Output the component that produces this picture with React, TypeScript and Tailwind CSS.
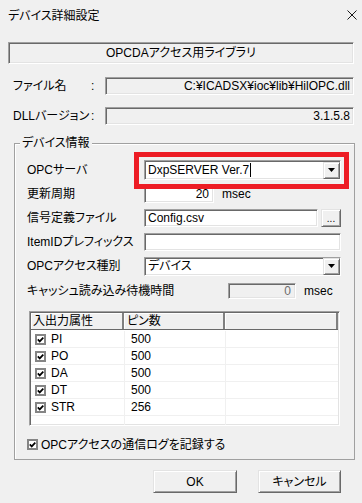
const sunken =
  'border border-t-[#a0a0a0] border-l-[#a0a0a0] border-b-white border-r-white shadow-[inset_1px_1px_0_#696969,inset_-1px_-1px_0_#e3e3e3]';
const raised =
  'border border-t-[#e3e3e3] border-l-[#e3e3e3] border-b-[#696969] border-r-[#696969] bg-[#f0f0f0] shadow-[inset_1px_1px_0_#fff,inset_-1px_-1px_0_#a0a0a0]';

const pins = [
  ['PI', '500'],
  ['PO', '500'],
  ['DA', '500'],
  ['DT', '500'],
  ['STR', '256'],
];

function DropButton() {
  return (
    <span className={`flex h-[17px] w-[17px] shrink-0 items-center justify-center ${raised}`}>
      <svg width="7" height="4" viewBox="0 0 7 4">
        <path d="M0 0h7L3.5 4z" fill="#000" />
      </svg>
    </span>
  );
}

function Check() {
  return (
    <svg width="11" height="11" viewBox="0 0 11 11" className="shrink-0">
      <rect x="1" y="1" width="9" height="9" fill="#fff" stroke="#858585" strokeWidth="2" />
      <path d="M2.8 5.4 4.7 7.4 8.3 3.6" fill="none" stroke="#000" strokeWidth="1.7" />
    </svg>
  );
}

function Row({ label, wide, children }: { label: string; wide?: boolean; children: React.ReactNode }) {
  return (
    <div className="flex h-[24px] items-center">
      <span className={`${wide ? 'w-[201px]' : 'w-[117px]'} shrink-0 whitespace-nowrap`}>{label}</span>
      {children}
    </div>
  );
}

export default function App() {
  return (
    <div className="relative h-[503px] w-[362px] overflow-hidden bg-[#f0f0f0] text-[12px] leading-[14px] text-black [font-family:'Liberation_Sans','Noto_Sans_CJK_JP',sans-serif] [font-feature-settings:'palt']">
      <div className="flex h-[30px] items-center justify-between pl-2 pr-[5px]">
        <span className="[font-family:'Noto_Sans_CJK_JP',sans-serif]">デバイス詳細設定</span>
        <svg width="10" height="10" viewBox="0 0 10 10">
          <path d="M0.5 0.5 9.5 9.5M9.5 0.5 0.5 9.5" stroke="#1a1a1a" strokeWidth="1" />
        </svg>
      </div>

      <div className="px-2">
        <div className={`mt-[12px] flex h-[22px] w-[346px] items-center justify-center ${sunken}`}>
          OPCDAアクセス用ライブラリ
        </div>

        <div className="mt-[13px] flex h-[18px] items-center">
          <span className="w-[83px] pl-[5px]">ファイル名</span>
          <span className="w-[14px]">:</span>
          <div className={`flex h-[18px] w-[249px] items-center justify-end pr-[3px] ${sunken}`}>
            C:¥ICADSX¥ioc¥lib¥HilOPC.dll
          </div>
        </div>

        <div className="mt-[12px] flex h-[18px] items-center">
          <span className="w-[83px] whitespace-nowrap pl-[5px]">DLLバージョン</span>
          <span className="w-[14px]">:</span>
          <div className={`flex h-[18px] w-[249px] items-center justify-end pr-[3px] ${sunken}`}>3.1.5.8</div>
        </div>

        <fieldset className="ml-[6px] mt-[11px] h-[324px] w-[341px] border border-[#a0a0a0] shadow-[inset_1px_1px_0_#fff]">
          <legend className="ml-[5px] bg-[#f0f0f0] px-[2px] leading-[14px]">デバイス情報</legend>
          <div className="mt-[8px] pl-[12px]">
            <Row label="OPCサーバ">
              <div className={`flex h-[20px] w-[197px] items-center bg-white pl-[3px] ${sunken}`}>
                <span className="flex flex-1 items-center">
                  DxpSERVER Ver.7
                  <span className="ml-px inline-block h-[14px] w-px bg-black" />
                </span>
                <DropButton />
              </div>
            </Row>
            <Row label="更新周期">
              <div className={`flex h-[18px] w-[70px] items-center justify-end bg-white pr-[4px] ${sunken}`}>20</div>
              <span className="ml-[8px]">msec</span>
            </Row>
            <Row label="信号定義ファイル">
              <div className={`flex h-[18px] w-[174px] items-center bg-white pl-[3px] ${sunken}`}>Config.csv</div>
              <button className={`ml-[3px] flex h-[18px] w-[20px] items-end justify-center pb-[3px] text-[10px] leading-[8px] ${raised}`}>
                ...
              </button>
            </Row>
            <Row label="ItemIDプレフィックス">
              <div className={`h-[18px] w-[197px] bg-white ${sunken}`} />
            </Row>
            <Row label="OPCアクセス種別">
              <div className={`flex h-[19px] w-[197px] items-center bg-white pl-[3px] ${sunken}`}>
                <span className="flex-1">デバイス</span>
                <DropButton />
              </div>
            </Row>
            <div className="flex h-[26px] items-center">
              <span className="w-[201px] shrink-0 whitespace-nowrap">キャッシュ読み込み待機時間</span>
              <div className={`flex h-[16px] w-[68px] items-center justify-end pr-[4px] text-[#6d6d6d] ${sunken}`}>0</div>
              <span className="ml-[8px]">msec</span>
            </div>

            <div className={`ml-[2px] mt-[7px] h-[115px] w-[311px] overflow-hidden bg-white ${sunken}`}>
              <div className="m-px flex h-[17px] border-b border-[#696969] bg-[#f0f0f0]">
                <div className="flex w-[93px] items-center border-r-2 border-r-[#808080] pl-[2px] shadow-[inset_1px_1px_0_#fff]">
                  入出力属性
                </div>
                <div className="flex w-[101px] items-center border-r-2 border-r-[#808080] pl-[3px] shadow-[inset_1px_1px_0_#fff]">
                  ピン数
                </div>
                <div className="flex-1 border-r-2 border-r-[#808080] shadow-[inset_1px_1px_0_#fff]" />
              </div>
              {[...pins, ['', '']].map(([name, count], i) => (
                <div key={i} className="mx-px flex h-[17px] border-b border-[#f0f0f0]">
                  <div className="flex w-[94px] items-center gap-[5px] border-r border-[#f0f0f0] pl-[4px]">
                    {name ? <Check /> : null}
                    {name}
                  </div>
                  <div className="flex w-[101px] items-center border-r border-[#f0f0f0] pl-[6px]">{count}</div>
                  <div className="flex-1" />
                </div>
              ))}
            </div>

            <div className="mt-[12px] flex h-[13px] items-center gap-[3px]">
              <Check />
              <span>OPCアクセスの通信ログを記録する</span>
            </div>
          </div>
        </fieldset>

        <div className="mr-[13px] mt-[10px] flex justify-end gap-[21px]">
          <button className={`h-[23px] w-[84px] ${raised}`}>OK</button>
          <button className={`h-[23px] w-[83px] ${raised}`}>キャンセル</button>
        </div>
      </div>

      <div className="absolute left-[134px] top-[152px] h-[37px] w-[215px] border-[5px] border-[#ed1c24]" />
    </div>
  );
}
